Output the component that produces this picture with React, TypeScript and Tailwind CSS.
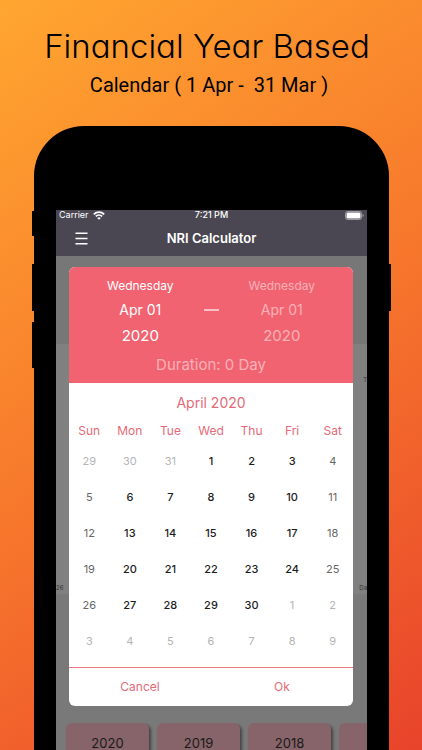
import { useState } from 'react'

const weekdays = ['Sun', 'Mon', 'Tue', 'Wed', 'Thu', 'Fri', 'Sat']

const weeks = [
  [29, 30, 31, 1, 2, 3, 4],
  [5, 6, 7, 8, 9, 10, 11],
  [12, 13, 14, 15, 16, 17, 18],
  [19, 20, 21, 22, 23, 24, 25],
  [26, 27, 28, 29, 30, 1, 2],
  [3, 4, 5, 6, 7, 8, 9],
]

const years = ['2020', '2019', '2018']

function dayClass(day: number, row: number, col: number) {
  const outside = (row === 0 && day > 7) || (row > 3 && day < 15)
  if (outside) return 'text-[#b4b4b4]'
  if (col === 0 || col === 6) return 'text-[#666666]'
  return 'font-medium text-[#1c1c1c]'
}

function StatusBar() {
  return (
    <div className="grid h-2.5 grid-cols-3 items-center pl-[3px] pr-[3px] text-[9px] leading-[10px]">
      <div className="flex items-center gap-1">
        <span>Carrier</span>
        <svg width="12" height="9" viewBox="0 0 12 9" fill="none" stroke="currentColor" strokeWidth="1.8">
          <path d="M0.8 3.3C3.7 0.4 8.3 0.4 11.2 3.3" />
          <path d="M2.8 5.4C4.6 3.7 7.4 3.7 9.2 5.4" />
          <path d="M4.2 6.9C5.2 6 6.8 6 7.8 6.9L6 8.8Z" fill="currentColor" stroke="none" />
        </svg>
      </div>
      <span className="text-center font-medium">7:21 PM</span>
      <svg className="justify-self-end" width="19" height="9" viewBox="0 0 19 9">
        <rect x="0.5" y="0.5" width="16" height="8" rx="2" fill="none" stroke="#9c9ba3" />
        <rect x="1.5" y="1.5" width="14" height="6" rx="1.2" fill="#fff" />
        <path d="M17.5 3v3c.8-.2 1.2-.8 1.2-1.5S18.3 3.2 17.5 3Z" fill="#9c9ba3" />
      </svg>
    </div>
  )
}

function DateColumn({ className }: { className: string }) {
  return (
    <div className={`flex flex-1 flex-col items-center ${className}`}>
      <span className="text-xs leading-6">Wednesday</span>
      <span className="text-sm leading-6">Apr 01</span>
      <span className="text-[15px] leading-7">2020</span>
    </div>
  )
}

function DatePicker() {
  const [selected, setSelected] = useState('')

  return (
    <div role="dialog" aria-label="Select dates" className="overflow-hidden rounded-md bg-white">
      <div className="bg-[#f16371] pt-[7px] text-white">
        <div className="flex items-start px-2">
          <DateColumn className="text-white" />
          <span className="mt-[35px] h-[2px] w-[15px] shrink-0 bg-white/60" />
          <DateColumn className="text-white/50" />
        </div>
        <p className="pb-1 pt-px text-center text-[15px] leading-7 text-white/50">Duration: 0 Day</p>
      </div>

      <h2 className="pt-2 text-center text-sm leading-6 text-[#e56a78]">April 2020</h2>
      <table className="mb-2 mt-1 w-full table-fixed text-center">
        <thead>
          <tr className="h-6 text-xs text-[#e56a78]">
            {weekdays.map((d) => (
              <th key={d} scope="col" className="p-0 text-center font-normal">{d}</th>
            ))}
          </tr>
        </thead>
        <tbody>
          {weeks.map((week, row) => (
            <tr key={row} className="h-9">
              {week.map((day, col) => (
                <td key={col} className="p-0">
                  <button
                    onClick={() => setSelected(`${row}-${col}`)}
                    aria-pressed={selected === `${row}-${col}`}
                    className={`h-9 w-full text-[11px] leading-9 ${dayClass(day, row, col)}`}
                  >
                    {day}
                  </button>
                </td>
              ))}
            </tr>
          ))}
        </tbody>
      </table>

      <div className="h-px bg-[#e97883]" />
      <div className="grid grid-cols-2 text-[12px] text-[#e56a78]">
        <button className="h-[38px]">Cancel</button>
        <button className="h-[38px]">Ok</button>
      </div>
    </div>
  )
}

function Phone() {
  return (
    <div className="relative ml-[34px] mr-[33px] mt-[26px] flex min-h-0 flex-1 flex-col rounded-t-[50px] bg-black px-[22px] pt-[84px]">
      {/* side keys */}
      <span className="absolute -left-0.5 top-[85px] h-[25px] w-1 bg-black" />
      <span className="absolute -left-0.5 top-[138px] h-[47px] w-1 bg-black" />
      <span className="absolute -left-0.5 top-[196px] h-[46px] w-1 bg-black" />
      <span className="absolute -right-0.5 top-[138px] h-[47px] w-1 bg-black" />

      <div className="relative flex min-h-0 flex-1 flex-col overflow-hidden bg-[#797979]">
        <header className="shrink-0 bg-[#4a4752] text-white">
          <StatusBar />
          <div className="grid h-9 grid-cols-[32px_1fr_32px] items-center pt-px">
            <button aria-label="Menu" className="flex justify-end">
              <svg width="13" height="13" viewBox="0 0 13 13" stroke="#fff" strokeWidth="1.5">
                <path d="M0.5 1.2H12.5M0.5 6.5H12.5M0.5 11.8H12.5" />
              </svg>
            </button>
            <h1 className="text-center text-[13px] font-semibold">NRI Calculator</h1>
          </div>
        </header>

        {/* dimmed page behind the dialog */}
        <div className="h-[88px] shrink-0 bg-[#777777]" />
        <div className="flex h-[250px] shrink-0 flex-col justify-between bg-[#808080] text-[6px] leading-3 text-[#333333]">
          <span className="mt-[30px] self-end">T</span>
          <div className="flex justify-between">
            <span>26</span>
            <span>Da</span>
          </div>
        </div>
        <div className="mt-[129px] flex shrink-0 gap-2 overflow-hidden pl-2.5">
          {years.map((year) => (
            <button
              key={year}
              className="h-[54px] w-[83px] shrink-0 rounded-md bg-[#866469] pb-3 text-[13px] text-[#1a1a1a] shadow-[2px_2px_3px_rgba(0,0,0,0.45)]"
            >
              {year}
            </button>
          ))}
          <div className="h-[54px] flex-1 rounded-l-md bg-[#866469]" />
        </div>

        <div className="absolute inset-x-0 top-[57px] pl-[13px] pr-[14px]">
          <DatePicker />
        </div>
      </div>
    </div>
  )
}

export default function App() {
  return (
    <main className="flex h-screen min-h-[750px] flex-col overflow-hidden bg-[linear-gradient(145deg,#ffa630_0%,#f7782c_50%,#e8432b_100%)] font-['Inter',sans-serif]">
      <div className="pt-6 text-center text-black">
        <p className="pr-2 text-[33px] font-light leading-11 [font-feature-settings:'cv11']">Financial Year Based</p>
        <p className="whitespace-pre pr-1 pt-[3px] pb-px font-['Roboto',sans-serif] text-xl leading-7">Calendar ( 1 Apr -  31 Mar )</p>
      </div>
      <Phone />
    </main>
  )
}
